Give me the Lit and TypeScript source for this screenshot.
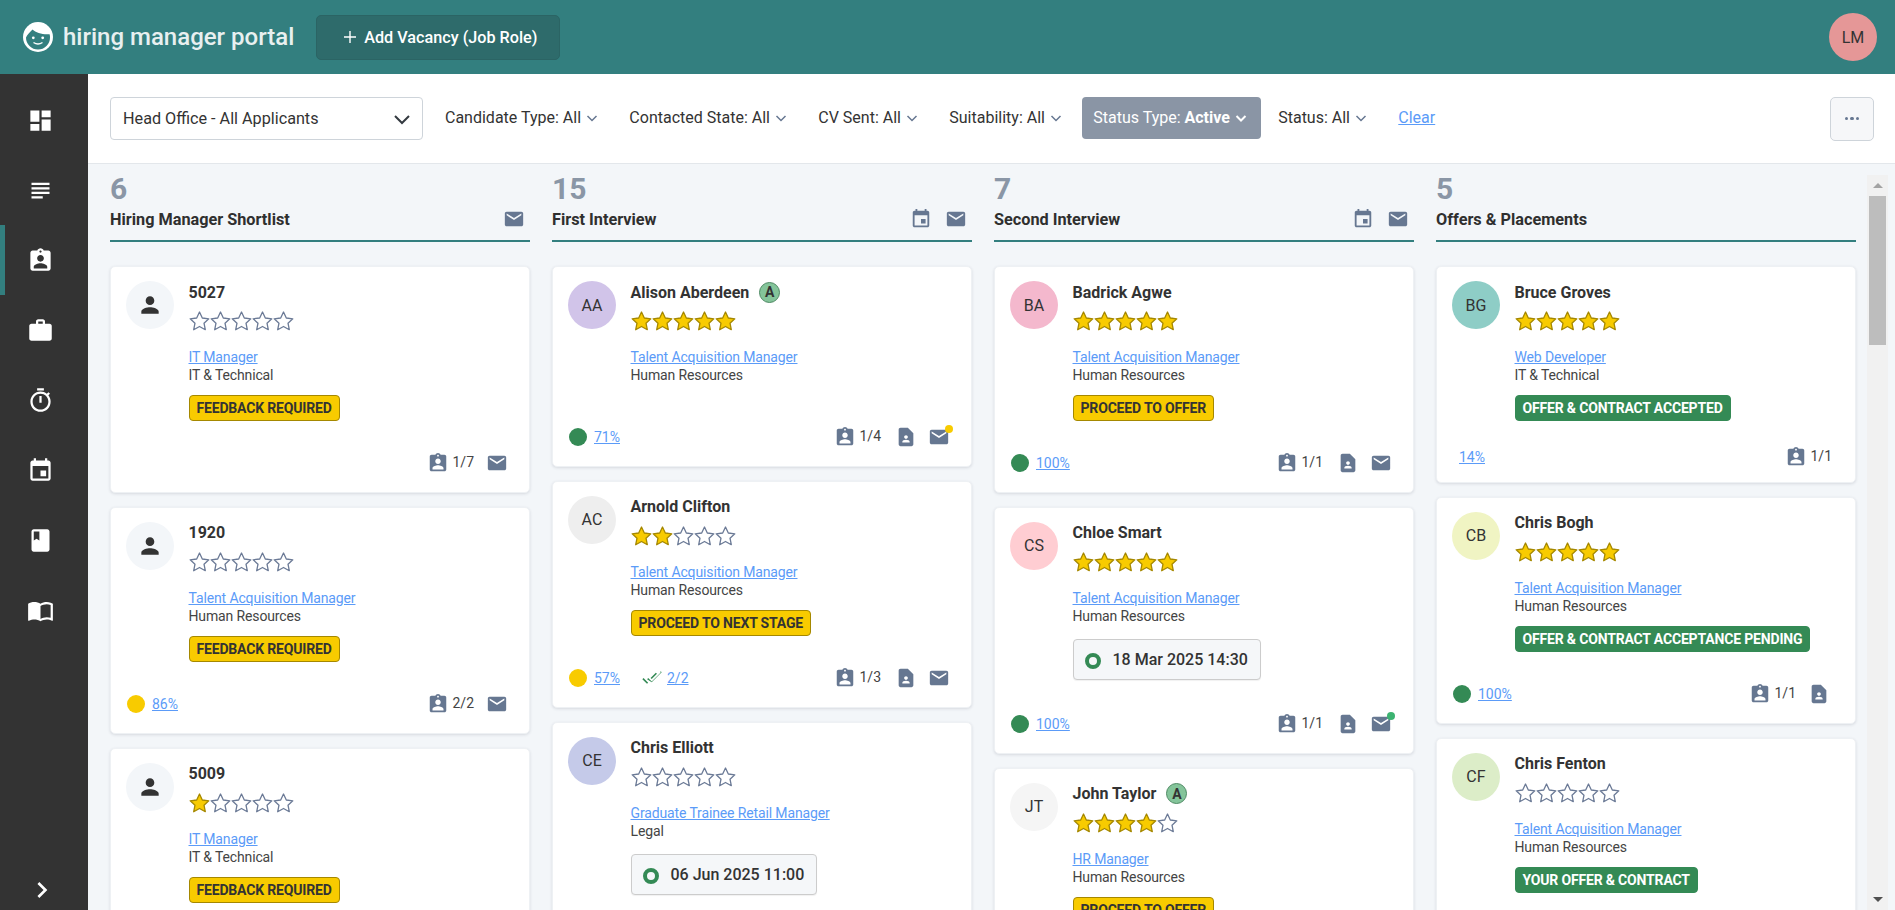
import { LitElement, css, html, svg, nothing } from "lit";
import { customElement } from "lit/decorators.js";

const ICONS: Record<string, string> = {
  dashboard: "M3 13h8V3H3v10zm0 8h8v-6H3v6zm10 0h8V11h-8v10zm0-18v6h8V3h-8z",
  subject: "M14 17H4v2h10v-2zm6-8H4v2h16V9zM4 15h16v-2H4v2zM4 5v2h16V5H4z",
  badge:
    "M19 3h-4.18C14.4 1.84 13.3 1 12 1c-1.3 0-2.4.84-2.82 2H5c-1.1 0-2 .9-2 2v14c0 1.1.9 2 2 2h14c1.1 0 2-.9 2-2V5c0-1.1-.9-2-2-2zm-7 0c.55 0 1 .45 1 1s-.45 1-1 1-1-.45-1-1 .45-1 1-1zm0 4c1.66 0 3 1.34 3 3s-1.34 3-3 3-3-1.34-3-3 1.34-3 3-3zm6 12H6v-1.4c0-2 4-3.1 6-3.1s6 1.1 6 3.1V19z",
  work: "M20 6h-4V4c0-1.11-.89-2-2-2h-4c-1.11 0-2 .89-2 2v2H4c-1.11 0-1.99.89-1.99 2L2 19c0 1.11.89 2 2 2h16c1.11 0 2-.89 2-2V8c0-1.11-.89-2-2-2zm-6 0h-4V4h4v2z",
  timer:
    "M15 1H9v2h6V1zm-4 13h2V8h-2v6zm8.03-6.61l1.42-1.42c-.43-.51-.9-.99-1.41-1.41l-1.42 1.42C16.07 4.74 14.12 4 12 4c-4.97 0-9 4.03-9 9s4.02 9 9 9 9-4.03 9-9c0-2.12-.74-4.07-1.97-5.61zM12 20c-3.87 0-7-3.13-7-7s3.13-7 7-7 7 3.13 7 7-3.13 7-7 7z",
  event:
    "M17 12h-5v5h5v-5zM16 1v2H8V1H6v2H5c-1.11 0-1.99.9-1.99 2L3 19c0 1.1.89 2 2 2h14c1.1 0 2-.9 2-2V5c0-1.1-.9-2-2-2h-1V1h-2zm3 18H5V8h14v11z",
  book: "M18 2H6c-1.1 0-2 .9-2 2v16c0 1.1.9 2 2 2h12c1.1 0 2-.9 2-2V4c0-1.1-.9-2-2-2zM6 4h5v8l-2.5-1.5L6 12V4z",
  open: "M21 5c-1.11-.35-2.33-.5-3.5-.5-1.95 0-4.05.4-5.5 1.5-1.45-1.1-3.55-1.5-5.5-1.5S2.45 4.9 1 6v14.65c0 .25.25.5.5.5.1 0 .15-.05.25-.05C3.1 20.45 5.05 20 6.5 20c1.95 0 4.05.4 5.5 1.5 1.35-.85 3.8-1.5 5.5-1.5 1.65 0 3.35.3 4.75 1.05.1.05.15.05.25.05.25 0 .5-.25.5-.5V6c-.6-.45-1.25-.75-2-1zm0 13.5c-1.1-.35-2.3-.5-3.5-.5-1.7 0-4.15.65-5.5 1.5V8c1.35-.85 3.8-1.5 5.5-1.5 1.2 0 2.4.15 3.5.5v11.5z",
  next: "M10 6L8.59 7.41 13.17 12l-4.58 4.59L10 18l6-6z",
  mail: "M20 4H4c-1.1 0-1.99.9-1.99 2L2 18c0 1.1.9 2 2 2h16c1.1 0 2-.9 2-2V6c0-1.1-.9-2-2-2zm0 4l-8 5-8-5V6l8 5 8-5v2z",
  doc: "M14 2H6c-1.1 0-2 .9-2 2v16c0 1.1.9 2 2 2h12c1.1 0 2-.9 2-2V8l-6-6zm-2 8c1.1 0 2 .9 2 2s-.9 2-2 2-2-.9-2-2 .9-2 2-2zm4 8H8v-.57c0-.81.48-1.53 1.22-1.85.85-.37 1.79-.58 2.78-.58.99 0 1.93.21 2.78.58.74.32 1.22 1.04 1.22 1.85V18z",
  person:
    "M12 12c2.21 0 4-1.79 4-4s-1.79-4-4-4-4 1.79-4 4 1.79 4 4 4zm0 2c-2.67 0-8 1.34-8 4v2h16v-2c0-2.66-5.33-4-8-4z",
  doneAll:
    "M18 7l-1.41-1.41-6.34 6.34 1.41 1.41L18 7zm4.24-1.41L11.66 16.17 7.48 12l-1.41 1.41L11.66 17l12-12-1.42-1.41zM.41 13.41L6 19l1.41-1.41L1.83 12 .41 13.41z",
};

const icon = (name: string, size = 22) => html`<svg
  class="icon"
  width=${size}
  height=${size}
  viewBox="0 0 24 24"
  fill="currentColor"
>
  ${svg`<path d=${ICONS[name]}></path>`}
</svg>`;

const chevron = () => html`<svg class="chev" width="16" height="16" viewBox="0 0 16 16">
  <polyline points="3.5,6 8,10.5 12.5,6"></polyline>
</svg>`;

type Card = {
  name: string;
  initials?: string;
  color?: string;
  stars: number;
  tag?: boolean;
  role: string;
  dept: string;
  status?: string;
  green?: boolean;
  date?: string;
  dot?: string;
  score?: string;
  cv?: string;
  count: string;
  doc?: boolean;
  mail?: boolean;
  notify?: string;
  compact?: boolean;
};

type Column = { count: number; title: string; cal?: boolean; mail?: boolean; cards: Card[] };

const TA = "Talent Acquisition Manager";
const HR = "Human Resources";
const YEL = "#f8cb00";
const GRN = "#348a55";

const COLUMNS: Column[] = [
  {
    count: 6,
    title: "Hiring Manager Shortlist",
    mail: true,
    cards: [
      { name: "5027", stars: 0, role: "IT Manager", dept: "IT & Technical", status: "FEEDBACK REQUIRED", count: "1/7", mail: true },
      { name: "1920", stars: 0, role: TA, dept: HR, status: "FEEDBACK REQUIRED", dot: YEL, score: "86%", count: "2/2", mail: true },
      { name: "5009", stars: 1, role: "IT Manager", dept: "IT & Technical", status: "FEEDBACK REQUIRED", count: "1/7", mail: true },
    ],
  },
  {
    count: 15,
    title: "First Interview",
    cal: true,
    mail: true,
    cards: [
      { name: "Alison Aberdeen", initials: "AA", color: "#d1c4e9", stars: 5, tag: true, role: TA, dept: HR, dot: GRN, score: "71%", count: "1/4", doc: true, mail: true, notify: YEL },
      { name: "Arnold Clifton", initials: "AC", color: "#eeeeee", stars: 2, role: TA, dept: HR, status: "PROCEED TO NEXT STAGE", dot: YEL, score: "57%", cv: "2/2", count: "1/3", doc: true, mail: true },
      { name: "Chris Elliott", initials: "CE", color: "#c5cae9", stars: 0, role: "Graduate Trainee Retail Manager", dept: "Legal", date: "06 Jun 2025 11:00", count: "1/3" },
    ],
  },
  {
    count: 7,
    title: "Second Interview",
    cal: true,
    mail: true,
    cards: [
      { name: "Badrick Agwe", initials: "BA", color: "#f4b8cd", stars: 5, role: TA, dept: HR, status: "PROCEED TO OFFER", dot: GRN, score: "100%", count: "1/1", doc: true, mail: true },
      { name: "Chloe Smart", initials: "CS", color: "#ffcdd2", stars: 5, role: TA, dept: HR, date: "18 Mar 2025 14:30", dot: GRN, score: "100%", count: "1/1", doc: true, mail: true, notify: "#3cb371" },
      { name: "John Taylor", initials: "JT", color: "#f5f5f5", stars: 4, tag: true, role: "HR Manager", dept: HR, status: "PROCEED TO OFFER", count: "1/1" },
    ],
  },
  {
    count: 5,
    title: "Offers & Placements",
    cards: [
      { name: "Bruce Groves", initials: "BG", color: "#8ecdc6", stars: 5, role: "Web Developer", dept: "IT & Technical", status: "OFFER & CONTRACT ACCEPTED", green: true, score: "14%", count: "1/1", compact: true },
      { name: "Chris Bogh", initials: "CB", color: "#f0f4c3", stars: 5, role: TA, dept: HR, status: "OFFER & CONTRACT ACCEPTANCE PENDING", green: true, dot: GRN, score: "100%", count: "1/1", doc: true },
      { name: "Chris Fenton", initials: "CF", color: "#dcedc8", stars: 0, role: TA, dept: HR, status: "YOUR OFFER & CONTRACT", green: true, count: "1/1" },
    ],
  },
];

const FILTERS: [string, string][] = [
  ["Candidate Type:", "All"],
  ["Contacted State:", "All"],
  ["CV Sent:", "All"],
  ["Suitability:", "All"],
  ["Status Type:", "Active"],
  ["Status:", "All"],
];

const NAV = ["dashboard", "subject", "badge", "work", "timer", "event", "book", "open"];

@customElement("app-root")
class AppRoot extends LitElement {
  static styles = css`
    :host {
      display: block;
      height: 910px;
      overflow: hidden;
      font-family: Roboto, "Liberation Sans", sans-serif;
      color: #333;
      background: #f3f6f9;
    }
    .icon {
      display: block;
      flex: none;
    }

    .topbar {
      height: 74px;
      background: #337f7f;
      display: flex;
      align-items: center;
      padding: 0 18px 0 23px;
    }
    .logo-text {
      margin-left: 10px;
      font-size: 24px;
      font-weight: 500;
      color: #e8f0f0;
      white-space: nowrap;
    }
    .add {
      margin-left: 22px;
      height: 45px;
      width: 244px;
      box-sizing: border-box;
      display: flex;
      align-items: center;
      padding-left: 27px;
      gap: 8px;
      background: #2e6b6b;
      border: 1px solid #2b6464;
      border-radius: 5px;
      color: #fff;
      font-size: 16.2px;
      font-weight: 500;
      white-space: nowrap;
    }
    .me {
      margin-left: auto;
      width: 48px;
      height: 48px;
      border-radius: 50%;
      background: #e59797;
      display: flex;
      align-items: center;
      justify-content: center;
      font-size: 16px;
    }

    .shell {
      display: flex;
      height: 836px;
    }
    .side {
      flex: none;
      width: 88px;
      background: #333;
      display: flex;
      flex-direction: column;
      padding-top: 11px;
      box-sizing: border-box;
      color: #fff;
    }
    .nav {
      height: 70px;
      width: 80px;
      display: flex;
      align-items: center;
      justify-content: center;
      border-left: 5px solid transparent;
      box-sizing: border-box;
      padding-right: 5px;
    }
    .nav.active {
      border-left-color: #337f7f;
    }
    .expand {
      margin-top: auto;
      margin-bottom: 4px;
      margin-left: 26px;
    }

    .main {
      flex: 1;
      min-width: 0;
      display: flex;
      flex-direction: column;
    }
    .toolbar {
      flex: none;
      height: 90px;
      box-sizing: border-box;
      background: #fff;
      border-bottom: 1px solid #e3e7eb;
      display: flex;
      align-items: center;
      padding: 0 21px 0 22px;
      font-size: 16px;
    }
    .select {
      width: 313px;
      height: 43px;
      box-sizing: border-box;
      border: 1px solid #ced4da;
      border-radius: 4px;
      display: flex;
      align-items: center;
      justify-content: space-between;
      padding: 0 11px 0 12px;
      margin-right: 11px;
      font-size: 16.2px;
    }
    .select svg polyline {
      fill: none;
      stroke: #343a40;
      stroke-width: 2;
    }
    .filter {
      height: 42px;
      display: flex;
      align-items: center;
      gap: 3px;
      padding: 0 12px 0 11px;
      margin-right: 6.3px;
      margin-bottom: 2px;
      border-radius: 4px;
      white-space: nowrap;
    }
    .chev polyline {
      fill: none;
      stroke: #667791;
      stroke-width: 1.5;
    }
    .filter.on {
      background: #8a95a5;
      color: #fff;
    }
    .filter.on b {
      font-weight: 700;
    }
    .filter.on .chev polyline {
      stroke: #fff;
      stroke-width: 2;
    }
    .clear {
      margin-left: 11px;
      margin-bottom: 2px;
      font-size: 16px;
    }
    a {
      color: #5b9bf8;
      text-decoration: underline;
    }
    .more {
      margin-left: auto;
      width: 44px;
      height: 44px;
      box-sizing: border-box;
      border: 1px solid #ced4da;
      border-radius: 5px;
      background: #f6f7f9;
      display: flex;
      align-items: center;
      justify-content: center;
      gap: 2px;
    }
    .more i {
      width: 3.5px;
      height: 3.5px;
      border-radius: 50%;
      background: #667791;
    }

    .board {
      flex: 1;
      min-height: 0;
      display: flex;
      padding-left: 22px;
      overflow: hidden;
    }
    .col {
      flex: none;
      width: 420px;
      margin-right: 22px;
    }
    .col:nth-child(4) {
      margin-right: 11px;
    }
    .col-head {
      padding-top: 10px;
      border-bottom: 2px solid #337f7f;
      margin-bottom: 24px;
      height: 78px;
      box-sizing: border-box;
    }
    .num {
      font-size: 30px;
      line-height: 30px;
      font-weight: 700;
      color: #8a96a6;
    }
    .col-title {
      margin-top: 4px;
      height: 22px;
      display: flex;
      align-items: center;
      font-size: 16.25px;
      font-weight: 700;
      color: #2f2f2f;
      padding-right: 5px;
    }
    .col-title span {
      flex: 1;
    }
    .col-title .icon {
      color: #667791;
      margin-left: 13px;
    }

    .card {
      background: #fff;
      border: 1px solid #eef1f4;
      border-radius: 5px;
      box-shadow: 0 1px 3px rgba(40, 50, 70, 0.14);
      margin-bottom: 13.5px;
      padding: 14px 0 18.3px;
    }
    .card-top {
      display: flex;
      gap: 14.5px;
      padding-left: 15px;
    }
    .avatar {
      flex: none;
      width: 48px;
      height: 48px;
      border-radius: 50%;
      background: #f3f6f9;
      display: flex;
      align-items: center;
      justify-content: center;
      font-size: 16px;
    }
    .name-row {
      height: 22px;
      display: flex;
      align-items: center;
      gap: 10px;
      font-size: 16px;
      font-weight: 700;
    }
    .tag {
      width: 21px;
      height: 21px;
      box-sizing: border-box;
      border-radius: 50%;
      border: 1px solid #4f8a64;
      background: #84c49a;
      display: flex;
      align-items: center;
      justify-content: center;
      font-size: 14px;
    }
    .stars {
      display: flex;
      margin-top: 8px;
      height: 20px;
    }
    .stars polygon {
      fill: #fff;
      stroke: #6b7a96;
      stroke-width: 1.3;
      stroke-linejoin: round;
    }
    .stars .full polygon {
      fill: #f8cb00;
      stroke: #a58800;
    }
    .role {
      margin-top: 17px;
      font-size: 14px;
      letter-spacing: -0.13px;
      line-height: 18px;
    }
    .dept {
      font-size: 14px;
      letter-spacing: -0.13px;
      line-height: 18px;
      color: #444;
    }
    .state {
      padding-top: 11px;
    }
    .status {
      display: inline-flex;
      align-items: center;
      height: 26px;
      box-sizing: border-box;
      padding: 0 7px;
      border-radius: 4px;
      border: 1px solid #a58800;
      background: #f8cb00;
      color: #333;
      font-size: 14px;
      letter-spacing: -0.17px;
      font-weight: 700;
      white-space: nowrap;
    }
    .status.green {
      background: #348a55;
      border-color: #348a55;
      color: #fff;
    }
    .date {
      display: inline-flex;
      align-items: center;
      gap: 12px;
      height: 41px;
      box-sizing: border-box;
      margin: 3px 0 2px;
      padding: 0 12px 0 11px;
      background: #f5f7f9;
      border: 1px solid #ccc;
      border-radius: 4px;
      box-shadow: 0 1px 1px rgba(0, 0, 0, 0.06);
      font-size: 16px;
      font-weight: 500;
      white-space: nowrap;
    }
    .ring {
      width: 16px;
      height: 16px;
      box-sizing: border-box;
      border: 4px solid #348a55;
      border-radius: 50%;
      margin-top: 3px;
    }
    .foot {
      display: flex;
      align-items: center;
      height: 22px;
      margin-top: 31px;
      padding: 0 25px 0 16px;
      font-size: 14px;
    }
    .foot.compact {
      margin-top: 25px;
      margin-bottom: -4px;
      padding-left: 22px;
    }
    .dot {
      width: 18px;
      height: 18px;
      border-radius: 50%;
      margin-right: 7px;
    }
    .cv {
      display: flex;
      align-items: center;
      gap: 5px;
      margin-left: 22px;
      color: #348a55;
    }
    .right {
      margin-left: auto;
      display: flex;
      align-items: center;
      gap: 14px;
      color: #667791;
    }
    .count {
      display: flex;
      align-items: center;
      gap: 3px;
      margin-right: -2px;
    }
    .count span {
      color: #444;
      margin-top: -2px;
    }
    .doc:not(:last-child) {
      margin: 0 -3px 0 2px;
    }
    .mail {
      position: relative;
      margin-right: -4px;
    }
    .mail i {
      position: absolute;
      top: -1px;
      left: 17px;
      width: 8px;
      height: 8px;
      border-radius: 50%;
    }

    .scroll {
      flex: none;
      width: 21px;
      margin-top: 11px;
      background: #f1f1f1;
      display: flex;
      flex-direction: column;
      align-items: center;
    }
    .arrow {
      flex: none;
      height: 21px;
      width: 100%;
      display: flex;
      align-items: center;
      justify-content: center;
    }
    .arrow::before {
      content: "";
      border-left: 5px solid transparent;
      border-right: 5px solid transparent;
      border-bottom: 5px solid #a3a3a3;
    }
    .arrow.down {
      margin-top: auto;
    }
    .arrow.down::before {
      border-bottom: 0;
      border-top: 5px solid #505050;
    }
    .thumb {
      width: 17px;
      height: 149px;
      background: #bdbdbd;
    }
  `;

  private renderStars(n: number) {
    return html`<div class="stars">
      ${[1, 2, 3, 4, 5].map(
        (i) => html`<svg class=${i <= n ? "full" : ""} width="21" height="20" viewBox="0 0 21 20">
          <polygon
            points="10.5,1 13.3,7 19.8,7.8 15,12.2 16.3,18.7 10.5,15.5 4.7,18.7 6,12.2 1.2,7.8 7.7,7"
          ></polygon>
        </svg>`
      )}
    </div>`;
  }

  private renderCard(c: Card) {
    return html`<div class="card">
      <div class="card-top">
        <div class="avatar" style=${c.color ? `background:${c.color}` : ""}>
          ${c.initials ?? icon("person", 26)}
        </div>
        <div>
          <div class="name-row">
            <span>${c.name}</span>
            ${c.tag ? html`<span class="tag">A</span>` : nothing}
          </div>
          ${this.renderStars(c.stars)}
          <div class="role"><a href="#">${c.role}</a></div>
          <div class="dept">${c.dept}</div>
          <div class="state">
            ${c.status
              ? html`<span class="status ${c.green ? "green" : ""}">${c.status}</span>`
              : nothing}
            ${c.date ? html`<span class="date"><i class="ring"></i>${c.date}</span>` : nothing}
          </div>
        </div>
      </div>
      <div class="foot ${c.compact ? "compact" : ""}">
        ${c.dot ? html`<i class="dot" style="background:${c.dot}"></i>` : nothing}
        ${c.score ? html`<a href="#">${c.score}</a>` : nothing}
        ${c.cv
          ? html`<div class="cv">${icon("doneAll", 20)}<a href="#">${c.cv}</a></div>`
          : nothing}
        <div class="right">
          <div class="count">${icon("badge")}<span>${c.count}</span></div>
          ${c.doc ? html`<div class="doc">${icon("doc")}</div>` : nothing}
          ${c.mail
            ? html`<div class="mail">
                ${icon("mail")}
                ${c.notify ? html`<i style="background:${c.notify}"></i>` : nothing}
              </div>`
            : nothing}
        </div>
      </div>
    </div>`;
  }

  render() {
    return html`
      <header class="topbar">
        <svg width="30" height="30" viewBox="0 0 30 30">
          <circle cx="15" cy="15" r="15" fill="#fff"></circle>
          <path
            d="M3 15.5C4 12.5 7 10.5 9.5 7.5C13 11 20 12.8 26.6 12.2C27 13.5 27 14.5 27 15.5A12 12 0 0 1 3 15.5Z"
            fill="#337f7f"
          ></path>
          <circle cx="10.3" cy="15.8" r="1.4" fill="#fff"></circle>
          <circle cx="19.7" cy="15.8" r="1.4" fill="#fff"></circle>
          <path d="M10.5 20.5Q15 23.5 19.5 20.5" fill="none" stroke="#fff" stroke-width="1.4"></path>
        </svg>
        <span class="logo-text">hiring manager portal</span>
        <div class="add">
          <svg width="12" height="12" viewBox="0 0 12 12">
            <path d="M6 0v12M0 6h12" stroke="#fff" stroke-width="1.4"></path>
          </svg>
          Add Vacancy (Job Role)
        </div>
        <div class="me">LM</div>
      </header>
      <div class="shell">
        <nav class="side">
          ${NAV.map(
            (n) => html`<div class="nav ${n === "badge" ? "active" : ""}">${icon(n, 27)}</div>`
          )}
          <div class="expand">${icon("next", 32)}</div>
        </nav>
        <main class="main">
          <div class="toolbar">
            <div class="select">
              Head Office - All Applicants
              <svg width="18" height="18" viewBox="0 0 18 18">
                <polyline points="2,6 9,13 16,6"></polyline>
              </svg>
            </div>
            ${FILTERS.map(
              ([label, value]) => html`<div class="filter ${value === "Active" ? "on" : ""}">
                <span>${label} ${value === "Active" ? html`<b>${value}</b>` : value}</span>
                ${chevron()}
              </div>`
            )}
            <a class="clear" href="#">Clear</a>
            <div class="more"><i></i><i></i><i></i></div>
          </div>
          <div class="board">
            ${COLUMNS.map(
              (col) => html`<section class="col">
                <div class="col-head">
                  <div class="num">${col.count}</div>
                  <div class="col-title">
                    <span>${col.title}</span>
                    ${col.cal ? icon("event") : nothing} ${col.mail ? icon("mail") : nothing}
                  </div>
                </div>
                ${col.cards.map((c) => this.renderCard(c))}
              </section>`
            )}
            <div class="scroll">
              <div class="arrow"></div>
              <div class="thumb"></div>
              <div class="arrow down"></div>
            </div>
          </div>
        </main>
      </div>
    `;
  }
}

declare global {
  interface HTMLElementTagNameMap {
    "app-root": AppRoot;
  }
}
